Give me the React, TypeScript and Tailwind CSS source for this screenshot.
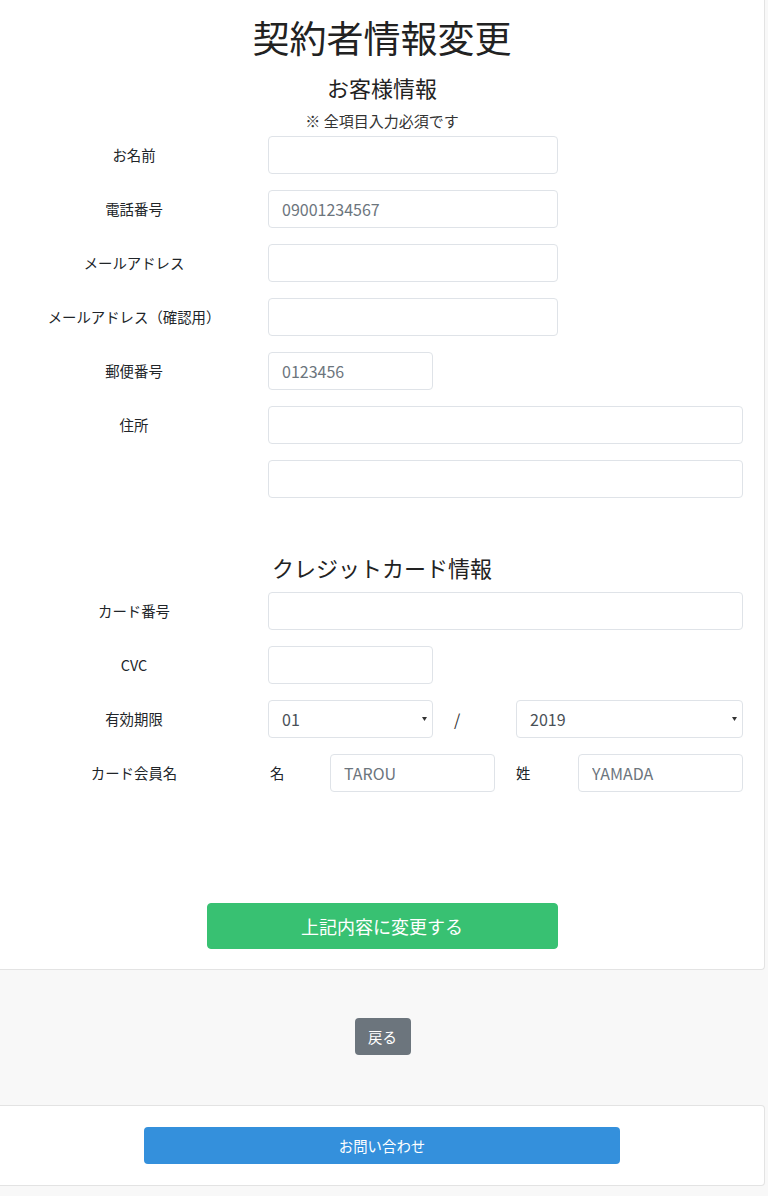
import React from 'react';

const font = { fontFamily: '"Noto Sans CJK JP", "Noto Sans", sans-serif' };

const inputCls =
  'h-[38px] rounded-[4px] border border-[#dfe3e8] bg-white px-[13px] text-[16px] text-[#495057] placeholder:text-[#6c757d] outline-none';

const FormRow: React.FC<{ label?: string; children: React.ReactNode }> = ({ label, children }) => (
  <div className="flex items-center mb-4">
    <div className="w-[268px] shrink-0 text-center text-[14.4px] text-[#212529]">{label}</div>
    <div className="w-[475px] flex items-center">{children}</div>
  </div>
);

const Select: React.FC<{ value: string; className: string }> = ({ value, className }) => (
  <div className={`relative ${className}`}>
    <select defaultValue={value} className={`${inputCls} w-full appearance-none`}>
      <option>{value}</option>
    </select>
    <svg
      className="pointer-events-none absolute right-[6px] top-1/2 -translate-y-1/2"
      width="5"
      height="4"
      viewBox="0 0 5 4"
    >
      <path d="M0 0h5L2.5 4z" fill="#333" />
    </svg>
  </div>
);

export default function App() {
  return (
    <div className="min-h-[1196px] bg-[#f8f8f8] text-[#212529]" style={font}>
      {/* main card */}
      <div className="mr-[3px] bg-white border-r border-b border-[#e3e3e3] rounded-br-[4px] pt-[15px] pb-[20px]">
        <h1 className="text-center text-[37px] leading-[44px] font-normal text-[#222]">契約者情報変更</h1>
        <h2 className="mt-[13px] text-center text-[22px] leading-[30px] font-normal text-[#222]">お客様情報</h2>
        <p className="mt-[9px] text-center text-[15px] leading-[20px] text-[#333]">※ 全項目入力必須です</p>

        <div className="mt-[5px]">
          <FormRow label="お名前">
            <input className={`${inputCls} w-[290px]`} />
          </FormRow>
          <FormRow label="電話番号">
            <input className={`${inputCls} w-[290px]`} placeholder="09001234567" />
          </FormRow>
          <FormRow label="メールアドレス">
            <input className={`${inputCls} w-[290px]`} />
          </FormRow>
          <FormRow label="メールアドレス（確認用）">
            <input className={`${inputCls} w-[290px]`} />
          </FormRow>
          <FormRow label="郵便番号">
            <input className={`${inputCls} w-[165px]`} placeholder="0123456" />
          </FormRow>
          <FormRow label="住所">
            <input className={`${inputCls} w-full`} />
          </FormRow>
          <FormRow>
            <input className={`${inputCls} w-full`} />
          </FormRow>
        </div>

        <h2 className="mt-[54px] text-center text-[22px] leading-[30px] font-normal text-[#222]">クレジットカード情報</h2>

        <div className="mt-[10px]">
          <FormRow label="カード番号">
            <input className={`${inputCls} w-full`} />
          </FormRow>
          <FormRow label="CVC">
            <input className={`${inputCls} w-[165px]`} />
          </FormRow>
          <FormRow label="有効期限">
            <Select value="01" className="w-[165px]" />
            <span className="w-[83px] pl-[21px] text-[16px] text-[#333]">/</span>
            <Select value="2019" className="w-[227px]" />
          </FormRow>
          <FormRow label="カード会員名">
            <span className="w-[62px] pl-[2px] text-[14.4px]">名</span>
            <input className={`${inputCls} w-[165px]`} placeholder="TAROU" />
            <span className="w-[83px] pl-[21px] text-[14.4px]">姓</span>
            <input className={`${inputCls} w-[165px]`} placeholder="YAMADA" />
          </FormRow>
        </div>

        <div className="mt-[111px] flex justify-center">
          <button className="w-[351px] h-[46px] rounded-[4px] bg-[#38c172] border border-[#38c172] text-white text-[18px]">
            上記内容に変更する
          </button>
        </div>
      </div>

      {/* back */}
      <div className="flex justify-center pt-[48px] pb-[50px] pr-[3px]">
        <button className="w-[56px] h-[37px] rounded-[4px] bg-[#6c757d] text-white text-[14.4px]">戻る</button>
      </div>

      {/* contact card */}
      <div className="mr-[3px] bg-white border border-l-0 border-[#e3e3e3] rounded-r-[4px] py-[21px] flex justify-center">
        <button className="w-[476px] h-[37px] rounded-[4px] bg-[#3490dc] text-white text-[14.4px]">お問い合わせ</button>
      </div>
    </div>
  );
}
